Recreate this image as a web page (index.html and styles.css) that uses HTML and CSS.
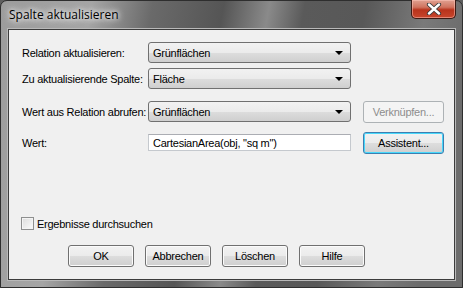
FILE: index.html
```html
<!DOCTYPE html>
<html lang="de">
<head>
  <meta charset="UTF-8">
  <title>Spalte aktualisieren</title>
  <link rel="stylesheet" href="styles.css">
</head>
<body>
  <div class="window">
    <div class="titlebar">
      <span class="title">Spalte aktualisieren</span>
      <div class="close">
        <svg width="20" height="12" viewBox="0 0 20 12">
          <path d="M5 1.5 L15 10.5 M15 1.5 L5 10.5" stroke="#3a3a3a" stroke-width="4.2" stroke-linecap="round"/>
          <path d="M5 1.5 L15 10.5 M15 1.5 L5 10.5" stroke="#ffffff" stroke-width="2.4" stroke-linecap="round"/>
        </svg>
      </div>
    </div>

    <div class="client">
      <div class="row row1">
        <label class="lbl">Relation aktualisieren:</label>
        <div class="combo">Grünflächen<span class="arrow"></span></div>
      </div>
      <div class="row row2">
        <label class="lbl">Zu aktualisierende Spalte:</label>
        <div class="combo">Fläche<span class="arrow"></span></div>
      </div>
      <div class="row row3">
        <label class="lbl">Wert aus Relation abrufen:</label>
        <div class="combo">Grünflächen<span class="arrow"></span></div>
        <button class="btn side disabled">Verknüpfen...</button>
      </div>
      <div class="row row4">
        <label class="lbl">Wert:</label>
        <div class="field">CartesianArea(obj, "sq m")</div>
        <button class="btn side default">Assistent...</button>
      </div>

      <div class="check-row">
        <span class="checkbox"></span>
        <span>Ergebnisse durchsuchen</span>
      </div>

      <div class="buttons">
        <button class="btn">OK</button>
        <button class="btn">Abbrechen</button>
        <button class="btn">Löschen</button>
        <button class="btn">Hilfe</button>
      </div>
    </div>
  </div>
</body>
</html>
```

FILE: styles.css
```css
body {
  margin: 0;
  background: #5e5e5e;
  font-family: "Liberation Sans", Arial, sans-serif;
  font-size: 11px;
  letter-spacing: -0.25px;
  color: #000;
}
.window {
  width: 463px;
  height: 288px;
  box-sizing: border-box;
  padding: 0 7px 7px 7px;
  border-radius: 7px 7px 0 0;
  border: 1px solid #2e2e2e;
  background:
    linear-gradient(100deg, #9c9c9c 0px, #a5a5a5 90px, #6a6a6a 150px, #555 220px, #8a8a8a 265px, #5a5a5a 300px, #585858 360px, #7a7a7a 420px, #6c6c6c 463px);
  display: flex;
  flex-direction: column;
}
.titlebar {
  height: 28px;
  display: flex;
  align-items: flex-start;
  justify-content: space-between;
}
.title {
  font-family: "Open Sans", "Noto Sans", sans-serif;
  font-size: 12px;
  letter-spacing: 0;
  margin-top: 5px;
  margin-left: 1px;
  color: #000;
  text-shadow: 0 0 8px #e8e8e8, 0 0 6px #e8e8e8, 0 0 4px #e8e8e8;
}
.close {
  width: 45px;
  height: 19px;
  margin-top: -1px;
  margin-right: -1px;
  box-sizing: border-box;
  border: 1px solid #3b1a14;
  border-top: none;
  border-radius: 0 0 5px 5px;
  background: linear-gradient(#e0a191 0%, #d0735f 40%, #b8331c 55%, #c8462c 100%);
  box-shadow: inset 0 0 0 1px rgba(255, 200, 190, 0.5);
  display: flex;
  align-items: center;
  justify-content: center;
}
.client {
  flex: 1;
  background: #f0f0f0;
  border: 1px solid #3c3c3c;
  box-shadow: 0 0 0 1px #b9b9b9;
  padding: 12px 0 0 13px;
  display: flex;
  flex-direction: column;
}
.row {
  display: flex;
  align-items: center;
  height: 21px;
}
.row2 { margin-top: 5px; }
.row3 { margin-top: 12px; }
.row4 { margin-top: 10px; }
.lbl {
  width: 126px;
  white-space: nowrap;
}
.combo {
  width: 203px;
  height: 21px;
  box-sizing: border-box;
  border: 1px solid #707070;
  border-radius: 3px;
  background: linear-gradient(#f2f2f2 0%, #ebebeb 50%, #dddddd 51%, #cfcfcf 100%);
  padding-left: 4px;
  display: flex;
  align-items: center;
  position: relative;
}
.arrow {
  position: absolute;
  right: 7px;
  top: 8px;
  width: 0;
  height: 0;
  border-left: 4px solid transparent;
  border-right: 4px solid transparent;
  border-top: 4px solid #000;
}
.field {
  width: 203px;
  height: 17px;
  box-sizing: border-box;
  border: 1px solid #c5c9ce;
  border-top-color: #abadb3;
  background: #fff;
  padding-left: 4px;
  display: flex;
  align-items: center;
}
.btn {
  font-family: "Liberation Sans", Arial, sans-serif;
  font-size: 11px;
  letter-spacing: -0.25px;
  color: #000;
  width: 66px;
  height: 22px;
  padding: 0;
  box-sizing: border-box;
  border: 1px solid #707070;
  border-radius: 3px;
  background: linear-gradient(#f2f2f2 0%, #ebebeb 50%, #dddddd 51%, #cfcfcf 100%);
  box-shadow: inset 0 0 0 1px #fbfbfb;
}
.side {
  width: 81px;
  margin-left: 12px;
}
.disabled {
  color: #8d8d8d;
  border-color: #adb2b5;
  background: #f4f4f4;
  box-shadow: none;
}
.default {
  border-color: #3c7fb1;
  box-shadow: inset 0 0 0 1px #48d8fb;
}
.check-row {
  display: flex;
  align-items: center;
  margin-top: 64px;
  margin-left: -1px;
  height: 13px;
}
.checkbox {
  width: 13px;
  height: 13px;
  box-sizing: border-box;
  border: 1px solid #8e8f8f;
  background: linear-gradient(135deg, #dcdcdc, #fbfbfb);
  box-shadow: inset 0 0 0 1px #f4f4f4;
  margin-right: 3px;
}
.buttons {
  display: flex;
  gap: 11px;
  margin-top: 15px;
  margin-left: 46px;
}
```
